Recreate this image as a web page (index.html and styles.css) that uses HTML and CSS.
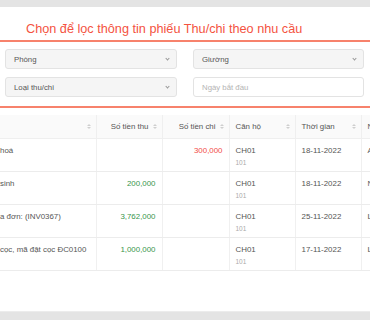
FILE: index.html
```html
<!DOCTYPE html>
<html lang="vi">
	<head>
		<meta charset="UTF-8" />
		<meta name="viewport" content="width=device-width, initial-scale=1.0" />
		<title>Phiếu thu chi</title>
		<link rel="stylesheet" href="styles.css">
	</head>
	<body>
		<div class="top-bar"></div>
		<div class="page">
			<h1 class="title">Chọn để lọc thông tin phiếu Thu/chi theo nhu cầu</h1>

			<div class="filters">
				<div class="select"><span>Phòng</span><i class="chevron"></i></div>
				<div class="select"><span>Giường</span><i class="chevron"></i></div>
				<div class="select"><span>Loại thu/chi</span><i class="chevron"></i></div>
				<div class="input"><span class="placeholder">Ngày bắt đầu</span></div>
			</div>

			<div class="table-wrap">
				<table class="list">
					<colgroup>
						<col style="width: 96px" />
						<col style="width: 66px" />
						<col style="width: 67px" />
						<col style="width: 66px" />
						<col style="width: 66px" />
						<col style="width: 70px" />
					</colgroup>
					<thead>
						<tr>
							<th><div class="th"><span class="grow"></span><i class="sort"></i></div></th>
							<th><div class="th right"><span>Số tiền thu</span><i class="sort"></i></div></th>
							<th><div class="th right"><span>Số tiền chi</span><i class="sort"></i></div></th>
							<th><div class="th"><span class="grow">Căn hộ</span><i class="sort"></i></div></th>
							<th><div class="th"><span class="grow">Thời gian</span><i class="sort"></i></div></th>
							<th><div class="th"><span class="grow">Người tạo</span></div></th>
						</tr>
					</thead>
					<tbody>
						<tr>
							<td class="desc">hoá</td>
							<td class="num"></td>
							<td class="num out">300,000</td>
							<td>CH01<div class="sub">101</div></td>
							<td>18-11-2022</td>
							<td>Admin</td>
						</tr>
						<tr>
							<td class="desc">sinh</td>
							<td class="num in">200,000</td>
							<td class="num"></td>
							<td>CH01<div class="sub">101</div></td>
							<td>18-11-2022</td>
							<td>Nguyễn</td>
						</tr>
						<tr>
							<td class="desc">a đơn: (INV0367)</td>
							<td class="num in">3,762,000</td>
							<td class="num"></td>
							<td>CH01<div class="sub">101</div></td>
							<td>25-11-2022</td>
							<td>Lê</td>
						</tr>
						<tr>
							<td class="desc">cọc, mã đặt cọc ĐC0100</td>
							<td class="num in">1,000,000</td>
							<td class="num"></td>
							<td>CH01<div class="sub">101</div></td>
							<td>17-11-2022</td>
							<td>Lê</td>
						</tr>
					</tbody>
				</table>
			</div>
		</div>
		<div class="bottom-bar"></div>
	</body>
</html>
```

FILE: styles.css
```css
* {
	margin: 0;
	padding: 0;
	box-sizing: border-box;
}
html,
body {
	width: 370px;
	height: 320px;
	overflow: hidden;
}
body {
	display: flex;
	flex-direction: column;
	background-color: #fff;
	font-family: "Liberation Sans", Arial, sans-serif;
	color: #444;
}
.top-bar {
	height: 7px;
	background-color: #e4e4e4;
	flex-shrink: 0;
}
.page {
	flex: 1;
	overflow: hidden;
}
.bottom-bar {
	height: 9px;
	background-color: #e4e4e4;
	border-top: 1px solid #ececec;
	flex-shrink: 0;
}
.title {
	height: 35px;
	padding: 14px 0 0 26px;
	font-size: 12.7px;
	line-height: 17px;
	font-weight: normal;
	color: #f4533f;
	border-bottom: 2px solid #f7826c;
	white-space: nowrap;
}
.filters {
	display: grid;
	grid-template-columns: 172px 171px;
	gap: 8px 16px;
	padding: 7px 6px 9px 5px;
	border-bottom: 2px solid #f7826c;
}
.select,
.input {
	height: 20px;
	border: 1px solid #e3e3e3;
	border-radius: 3px;
	display: flex;
	align-items: center;
	padding: 0 6px 0 8px;
	font-size: 7.8px;
	color: #555;
}
.select {
	background-color: #f5f5f5;
}
.select span {
	flex: 1;
}
.input {
	background-color: #fff;
}
.placeholder {
	color: #b4b4b4;
}
.chevron {
	width: 3px;
	height: 3px;
	border-right: 1px solid #999;
	border-bottom: 1px solid #999;
	transform: rotate(45deg);
	margin: -2px 1px 0 0;
}
.table-wrap {
	margin-top: 7px;
	overflow: hidden;
}
.list {
	table-layout: fixed;
	width: 431px;
	border-collapse: collapse;
	font-size: 7.9px;
}
.list th {
	height: 23px;
	background-color: #fafafa;
	font-weight: normal;
	color: #555;
	border-right: 1px solid #efefef;
	border-bottom: 1px solid #efefef;
	padding: 0 5px 0 6px;
	text-align: left;
}
.th {
	display: flex;
	align-items: center;
	gap: 4px;
	white-space: nowrap;
}
.th.right {
	justify-content: flex-end;
}
.grow {
	flex: 1;
}
.sort {
	display: flex;
	flex-direction: column;
	gap: 1px;
	width: 4px;
}
.sort::before,
.sort::after {
	content: "";
	border-left: 2px solid transparent;
	border-right: 2px solid transparent;
}
.sort::before {
	border-bottom: 2px solid #cfcfcf;
}
.sort::after {
	border-top: 2px solid #cfcfcf;
}
.list td {
	height: 33px;
	vertical-align: top;
	padding: 7px 6px 0;
	border-right: 1px solid #f0f0f0;
	border-bottom: 1px solid #ececec;
	white-space: nowrap;
	overflow: hidden;
	color: #555;
	line-height: 9px;
}
.list td.desc {
	padding-left: 0;
}
.list td.num {
	text-align: right;
}
.list td.in {
	color: #37954c;
}
.list td.out {
	color: #f24a48;
}
.sub {
	margin-top: 3px;
	font-size: 6.5px;
	color: #aaa;
}
```
